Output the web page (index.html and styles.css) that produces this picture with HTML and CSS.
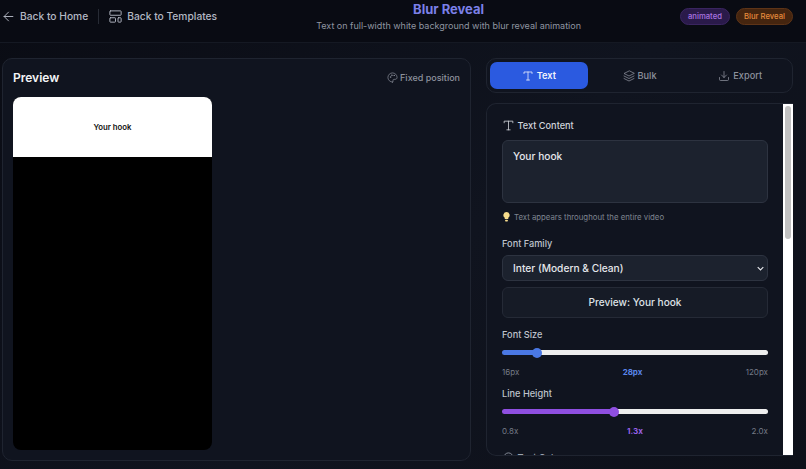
FILE: index.html
```html
<!DOCTYPE html>
<html lang="en">
<head>
    <meta charset="UTF-8">
    <meta name="viewport" content="width=device-width, initial-scale=1.0">
    <title>Blur Reveal</title>
    <link rel="stylesheet" href="styles.css">
</head>
<body>
    <header class="topbar">
        <nav class="topbar-nav">
            <a class="nav-link" href="#">
                <svg class="icon icon-nav" viewBox="0 0 24 24"><path d="M19 12H5M12 19l-7-7 7-7"/></svg>
                Back to Home
            </a>
            <span class="nav-divider"></span>
            <a class="nav-link" href="#">
                <svg class="icon icon-nav" viewBox="0 0 24 24"><rect x="3" y="3" width="18" height="7" rx="1"/><rect x="3" y="14" width="9" height="7" rx="1"/><rect x="16" y="14" width="5" height="7" rx="1"/></svg>
                Back to Templates
            </a>
        </nav>
        <div class="topbar-title">
            <h1>Blur Reveal</h1>
            <p>Text on full-width white background with blur reveal animation</p>
        </div>
        <div class="badges">
            <span class="badge badge-purple">animated</span>
            <span class="badge badge-orange">Blur Reveal</span>
        </div>
    </header>

    <main class="layout">
        <section class="preview-panel">
            <div class="preview-head">
                <h2>Preview</h2>
                <span class="preview-note">
                    <svg class="icon icon-small" viewBox="0 0 24 24"><path d="M12 22a10 10 0 1 1 10-10c0 2.500-2 4-4.500 4H15a2 2 0 0 0-1.500 3.300c.5.700 0 2.700-1.500 2.700z"/><circle cx="7.500" cy="11" r=".8"/><circle cx="10.500" cy="7" r=".8"/><circle cx="15.500" cy="7.500" r=".8"/></svg>
                    Fixed position
                </span>
            </div>
            <div class="video-frame">
                <div class="video-banner">Your hook</div>
            </div>
        </section>

        <section class="editor">
            <div class="tabs">
                <button class="tab tab-active">
                    <svg class="icon icon-tab" viewBox="0 0 24 24"><path d="M4 7V4h16v3M9 20h6M12 4v16"/></svg>
                    Text
                </button>
                <button class="tab">
                    <svg class="icon icon-tab" viewBox="0 0 24 24"><path d="M12 2 2 7l10 5 10-5z"/><path d="m2 12 10 5 10-5M2 17l10 5 10-5"/></svg>
                    Bulk
                </button>
                <button class="tab">
                    <svg class="icon icon-tab" viewBox="0 0 24 24"><path d="M21 15v4a2 2 0 0 1-2 2H5a2 2 0 0 1-2-2v-4M7 10l5 5 5-5M12 15V3"/></svg>
                    Export
                </button>
            </div>

            <div class="settings-frame">
                <div class="settings">
                    <div class="settings-title">
                        <svg class="icon icon-title" viewBox="0 0 24 24"><path d="M4 7V4h16v3M9 20h6M12 4v16"/></svg>
                        Text Content
                    </div>
                    <textarea class="text-input">Your hook</textarea>
                    <p class="hint">
                        <svg class="hint-bulb" viewBox="0 0 10 14"><path d="M5 0a4.500 4.500 0 0 0-2.500 8.200V10h5V8.200A4.500 4.500 0 0 0 5 0z"/><rect x="3" y="11" width="4" height="2.500" rx="1"/></svg>
                        Text appears throughout the entire video
                    </p>

                    <label class="field-label label-family">Font Family</label>
                    <select class="font-select">
                        <option>Inter (Modern &amp; Clean)</option>
                    </select>
                    <div class="font-preview">Preview: Your hook</div>

                    <label class="field-label label-size">Font Size</label>
                    <input class="slider slider-blue" type="range" min="16" max="120" value="28" style="--fill: 13%">
                    <div class="scale">
                        <span>16px</span>
                        <span class="scale-value value-blue">28px</span>
                        <span>120px</span>
                    </div>

                    <label class="field-label label-height">Line Height</label>
                    <input class="slider slider-purple" type="range" min="0.8" max="2" step="0.1" value="1.3" style="--fill: 42%">
                    <div class="scale">
                        <span>0.8x</span>
                        <span class="scale-value value-purple">1.3x</span>
                        <span>2.0x</span>
                    </div>

                    <div class="settings-title title-color">
                        <svg class="icon icon-title" viewBox="0 0 24 24"><circle cx="12" cy="12" r="8.500"/></svg>
                        Text Color
                    </div>
                </div>
                <div class="scrollbar">
                    <div class="scrollbar-thumb"></div>
                </div>
            </div>
        </section>
    </main>
</body>
</html>
```

FILE: styles.css
```css
* {
    box-sizing: border-box;
}

html, body {
    height: 100%;
}

body {
    margin: 0;
    overflow: hidden;
    font-family: Inter, "Liberation Sans", sans-serif;
    color: #e5e7eb;
    background: linear-gradient(135deg, #0a0c14 0%, #10141f 55%, #0d1019 100%);
}

.icon {
    fill: none;
    stroke: currentColor;
    stroke-width: 1.5;
    stroke-linecap: round;
    stroke-linejoin: round;
    flex-shrink: 0;
}

.icon-nav {
    width: 15px;
    height: 15px;
}

.icon-small {
    width: 11px;
    height: 11px;
}

.icon-tab {
    width: 12px;
    height: 12px;
}

.icon-title {
    width: 13px;
    height: 13px;
}

/* top bar */
.topbar {
    display: flex;
    justify-content: space-between;
    align-items: center;
    height: 43px;
    padding: 0 13px 10px 1px;
    background: #090b13;
    border-bottom: 1px solid #151923;
}

.topbar-nav {
    display: flex;
    align-items: center;
    gap: 9.500px;
}

.nav-link {
    display: flex;
    align-items: center;
    gap: 4px;
    font-size: 10.250px;
    font-weight: 500;
    color: #b4b9c4;
    text-decoration: none;
}

.nav-divider {
    width: 1px;
    height: 15px;
    background: #272b35;
}

.topbar-title {
    text-align: center;
}

.topbar-title h1 {
    margin: 0;
    font-size: 13px;
    line-height: 19px;
    font-weight: 700;
    color: #7b80e8;
}

.topbar-title p {
    margin: 0;
    font-size: 9px;
    line-height: 13px;
    color: #8f95a1;
}

.badges {
    display: flex;
    justify-content: flex-end;
    gap: 6px;
}

.badge {
    display: block;
    padding: 0 7px;
    height: 17px;
    line-height: 15px;
    font-size: 7.700px;
    font-weight: 500;
    border-radius: 9px;
    border: 1px solid;
}

.badge-purple {
    color: #a974e0;
    background: #2a1a4a;
    border-color: #3a2560;
}

.badge-orange {
    color: #e48a3c;
    background: #45250f;
    border-color: #5e3417;
}

/* main layout */
.layout {
    display: flex;
    align-items: flex-start;
    gap: 15px;
    padding: 15px 13px 0 2px;
}

.preview-panel {
    width: 469px;
    height: 403px;
    padding: 10px;
    background: #10141f;
    border: 1px solid #1f2430;
    border-radius: 10px;
}

.preview-head {
    display: flex;
    justify-content: space-between;
    align-items: center;
    height: 16px;
    margin-bottom: 12px;
}

.preview-head h2 {
    margin: 0;
    font-size: 12px;
    font-weight: 600;
    color: #f3f4f6;
}

.preview-note {
    display: flex;
    align-items: center;
    gap: 2px;
    font-size: 9px;
    font-weight: 500;
    color: #8d929d;
}

.video-frame {
    width: 199px;
    height: 353px;
    background: #000;
    border-radius: 8px;
    overflow: hidden;
}

.video-banner {
    display: flex;
    align-items: center;
    justify-content: center;
    height: 60px;
    background: #fff;
    color: #111;
    font-size: 7.800px;
    font-weight: 600;
}

/* editor column */
.editor {
    display: flex;
    flex-direction: column;
    gap: 10px;
    width: 307px;
}

.tabs {
    display: flex;
    gap: 3px;
    height: 35px;
    padding: 3px;
    background: #10141f;
    border: 1px solid #1f2430;
    border-radius: 10px;
}

.tab {
    flex: 1;
    display: flex;
    align-items: center;
    justify-content: center;
    gap: 3px;
    padding: 0;
    border: 0;
    border-radius: 7px;
    background: transparent;
    color: #8d929d;
    font-family: inherit;
    font-size: 9.200px;
    font-weight: 500;
}

.tab-active {
    background: #2b5ae0;
    color: #f1f4fd;
    font-weight: 600;
}

.settings-frame {
    display: flex;
    height: 353px;
    background: #10141f;
    border: 1px solid #1f2430;
    border-right: 0;
    border-radius: 10px 0 0 10px;
    overflow: hidden;
}

.settings {
    flex: 1;
    min-width: 0;
    padding: 14px 15px 0;
}

/* painted by hand, the screenshot browser hides native scrollbars */
.scrollbar {
    width: 10px;
    padding: 2px;
    background: #fff;
}

.scrollbar-thumb {
    height: 133px;
    background: #c1c1c1;
    border-radius: 3px;
}

.settings-title {
    display: flex;
    align-items: center;
    gap: 2.500px;
    height: 14px;
    font-size: 9.200px;
    font-weight: 500;
    color: #d1d5db;
}

.text-input {
    display: block;
    width: 100%;
    height: 63px;
    margin-top: 8px;
    padding: 9px 10px;
    resize: none;
    background: #1c222e;
    border: 1px solid #2d3340;
    border-radius: 6px;
    color: #e5e7eb;
    font-family: inherit;
    font-size: 10.200px;
    font-weight: 500;
}

.hint {
    display: flex;
    align-items: center;
    gap: 4px;
    margin: 8px 0 0;
    padding-left: 1px;
    height: 12px;
    font-size: 7.800px;
    color: #7e8490;
}

.hint-bulb {
    width: 7px;
    height: 10px;
    fill: #f6dc8c;
}

.field-label {
    display: block;
    font-size: 9.200px;
    line-height: 12px;
    font-weight: 500;
    color: #bfc3cc;
}

.label-family {
    margin-top: 15px;
}

.label-size {
    margin-top: 11px;
}

.label-height {
    margin-top: 10px;
}

.font-select {
    display: block;
    width: 100%;
    height: 26px;
    margin-top: 5px;
    padding: 0 10px;
    -webkit-appearance: none;
    appearance: none;
    background: #1c222e url("data:image/svg+xml,%3Csvg xmlns='http://www.w3.org/2000/svg' viewBox='0 0 10 6'%3E%3Cpath d='M1 1l4 4 4-4' fill='none' stroke='%23e5e7eb' stroke-width='1.600'/%3E%3C/svg%3E") no-repeat right 3px center / 7px 5px;
    border: 1px solid #2d3340;
    border-radius: 6px;
    color: #e5e7eb;
    font-family: inherit;
    font-size: 10.200px;
    font-weight: 500;
}

.font-preview {
    height: 31px;
    margin-top: 6px;
    line-height: 29px;
    text-align: center;
    background: #161b26;
    border: 1px solid #252a36;
    border-radius: 6px;
    font-size: 10.100px;
    font-weight: 500;
    color: #dfe2e7;
}

.slider {
    display: block;
    -webkit-appearance: none;
    appearance: none;
    width: 100%;
    height: 5px;
    margin: 9px 0 0;
    border-radius: 3px;
    background: #eee;
}

.slider-blue {
    background: linear-gradient(to right, #4a78e4 var(--fill), #eeeeee var(--fill));
}

.slider-purple {
    background: linear-gradient(to right, #8f4fe0 var(--fill), #eeeeee var(--fill));
}

.slider::-webkit-slider-thumb {
    -webkit-appearance: none;
    width: 10px;
    height: 10px;
    border-radius: 50%;
}

.slider-blue::-webkit-slider-thumb {
    background: #4a78e4;
}

.slider-purple::-webkit-slider-thumb {
    background: #8f4fe0;
}

.scale {
    display: flex;
    justify-content: space-between;
    margin-top: 12px;
    font-size: 8px;
    line-height: 11px;
    color: #757b87;
}

.scale-value {
    font-weight: 700;
}

.value-blue {
    color: #5a86ea;
}

.value-purple {
    color: #9a62e8;
}

.title-color {
    margin-top: 13px;
    color: #9ca3af;
}
```
